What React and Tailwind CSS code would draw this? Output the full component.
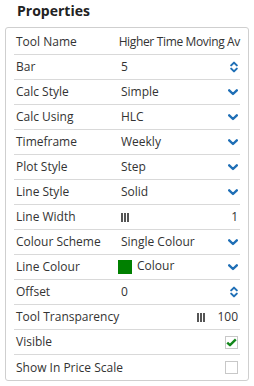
import React from "react";

const Chevron = () => (
  <svg width="10" height="7" viewBox="0 0 10 7" className="shrink-0">
    <path d="M1.2 1.3 L5 5 L8.8 1.3" fill="none" stroke="#1f6fb6" strokeWidth="2.4" strokeLinecap="round" strokeLinejoin="round" />
  </svg>
);

const Spinner = () => (
  <svg width="8" height="12" viewBox="0 0 8 12" className="shrink-0">
    <path d="M1.2 4.4 L4 1.6 L6.8 4.4" fill="none" stroke="#1f6fb6" strokeWidth="2" strokeLinecap="round" strokeLinejoin="round" />
    <path d="M1.2 7.6 L4 10.4 L6.8 7.6" fill="none" stroke="#1f6fb6" strokeWidth="2" strokeLinecap="round" strokeLinejoin="round" />
  </svg>
);

const Bars = () => (
  <span className="flex gap-[1px] h-[9px]">
    <span className="w-[2px] h-full bg-[#555]" />
    <span className="w-[2px] h-full bg-[#555]" />
    <span className="w-[2px] h-full bg-[#555]" />
  </span>
);

const Check = ({ checked }) => (
  <span className="w-[13px] h-[13px] border border-[#c8c8c8] bg-white flex items-center justify-center">
    {checked && (
      <svg width="11" height="9" viewBox="0 0 11 9">
        <path d="M1.2 4.6 L4 7.2 L9.8 1.4" fill="none" stroke="#12871b" strokeWidth="2.4" strokeLinejoin="round" />
      </svg>
    )}
  </span>
);

const Row = ({ label, children, right, last }) => (
  <div className={"flex items-center h-[25px] pl-[2px] pr-[2px] " + (last ? "" : "border-b border-[#d9d9d9]")}>
    <span className="w-[105px] shrink-0 whitespace-nowrap">{label}</span>
    <div className="flex-1 flex items-center min-w-0">{children}</div>
    {right}
  </div>
);

export default function App() {
  return (
    <div className="w-[254px] h-[386px] bg-white text-[#333] text-[12px] relative" style={{ fontFamily: '"Open Sans", sans-serif' }}>
      <h1 className="pl-[17px] pt-[1px] h-[26px] font-bold text-[14px] text-[#222] leading-[20px]">Properties</h1>
      <div className="mx-[5px] mt-[1px] border border-[#cfcfcf] rounded-[3px] px-[8px] pt-[2px]">
        <div className="flex items-center h-[25px] border-b border-[#d9d9d9] pl-[2px]">
          <span className="w-[100px] shrink-0">Tool Name</span>
          <span className="flex-1 text-right whitespace-nowrap tracking-[-0.35px]">Higher Time Moving Av</span>
        </div>
        <Row label="Bar" right={<Spinner />}>5</Row>
        <Row label="Calc Style" right={<Chevron />}>Simple</Row>
        <Row label="Calc Using" right={<Chevron />}>HLC</Row>
        <Row label="Timeframe" right={<Chevron />}>Weekly</Row>
        <Row label="Plot Style" right={<Chevron />}>Step</Row>
        <Row label="Line Style" right={<Chevron />}>Solid</Row>
        <Row label="Line Width" right={<span>1</span>}>
          <Bars />
        </Row>
        <Row label="Colour Scheme" right={<Chevron />}>Single Colour</Row>
        <Row label="Line Colour" right={<Chevron />}>
          <span className="w-[14px] h-[14px] bg-[#008000] -ml-[3px] mr-[5px]" />
          <span className="-mt-[2px]">Colour</span>
        </Row>
        <Row label="Offset" right={<Spinner />}>0</Row>
        <div className="flex items-center h-[25px] border-b border-[#d9d9d9] pl-[2px] pr-[2px]">
          <span className="flex-1">Tool Transparency</span>
          <span className="mr-[12px]"><Bars /></span>
          <span>100</span>
        </div>
        <Row label="Visible" right={<Check checked />} />
        <Row label="Show In Price Scale" right={<Check />} last />
      </div>
    </div>
  );
}
